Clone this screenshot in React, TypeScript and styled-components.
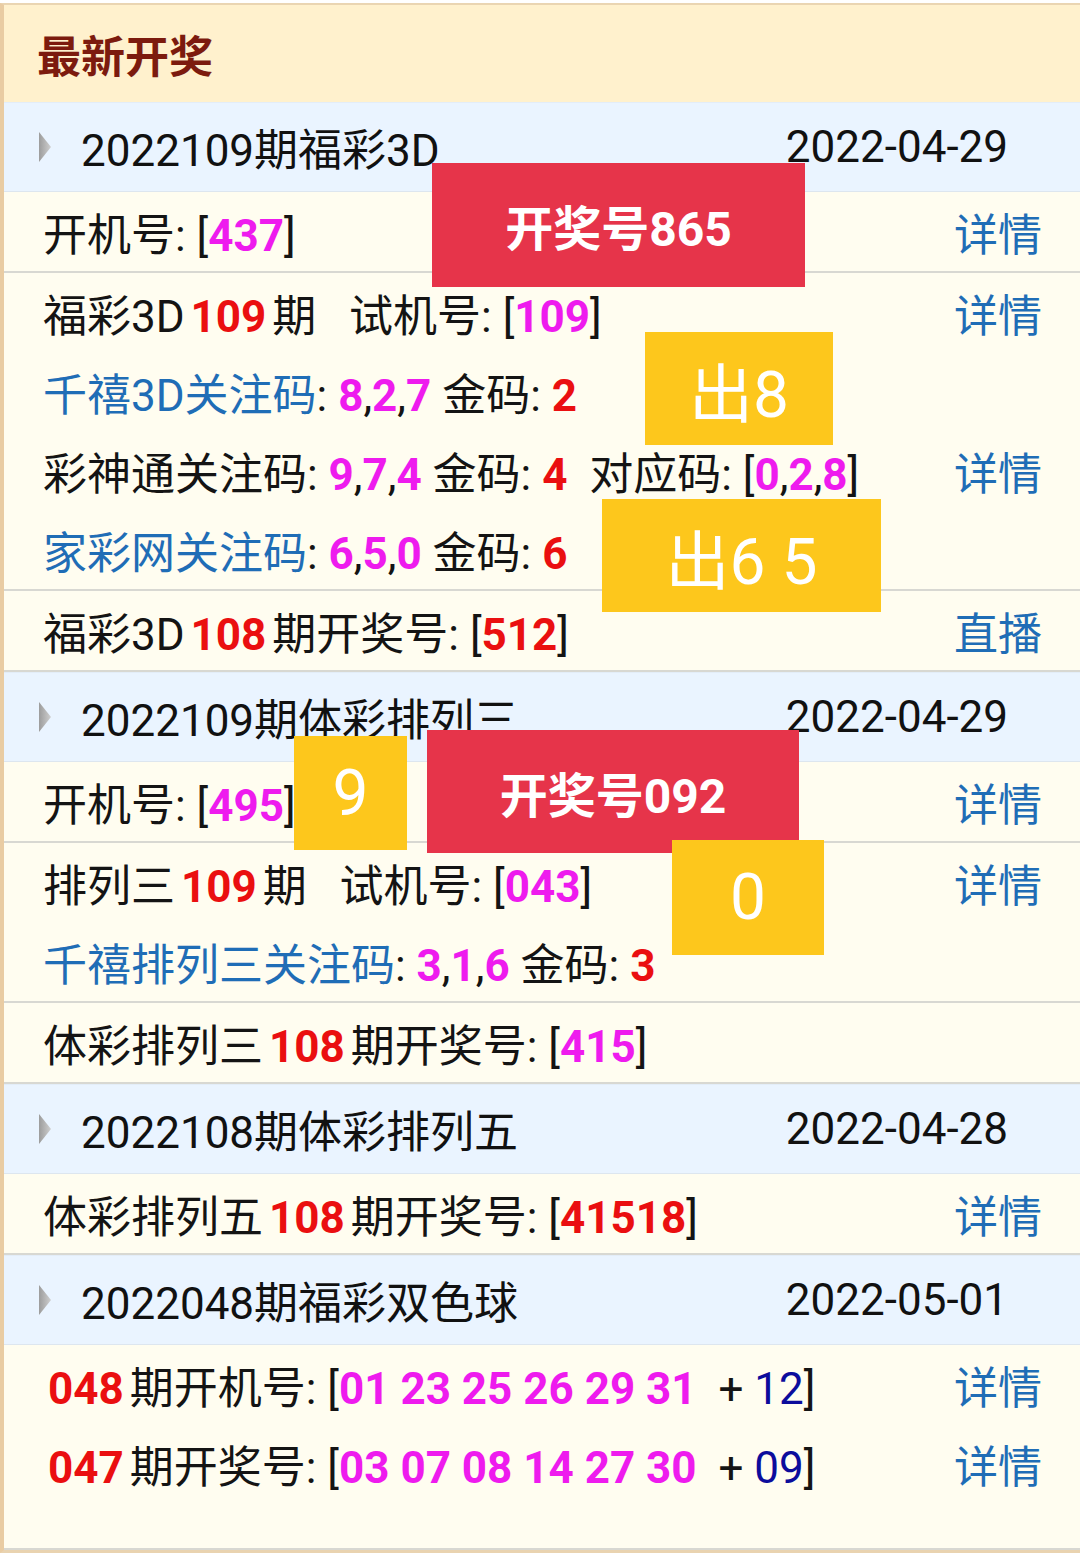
import React from 'react';
import styled, { createGlobalStyle } from 'styled-components';

const GlobalStyle = createGlobalStyle`
  html, body {
    margin: 0;
    padding: 0;
    background: #ffffff;
  }
  body {
    font-family: Roboto, "Noto Sans CJK SC", sans-serif;
    color: #141414;
  }
`;

const Page = styled.div`
  position: relative;
  width: 1080px;
  height: 1558px;
  padding-top: 3px;
  box-sizing: border-box;
  overflow: hidden;
  background: #ffffff;
`;

const Board = styled.div`
  border-top: 2px solid #ead5b2;
  border-left: 4px solid #e9cca3;
  border-bottom: 3px solid #e9d3b0;
  background: #fffdf0;
`;

const Title = styled.div`
  display: flex;
  align-items: center;
  height: 97px;
  padding-left: 33px;
  background: #fff1cd;
  color: #7c1b0e;
  font-size: 44px;
  font-weight: 700;
`;

const Head = styled.div`
  display: flex;
  align-items: center;
  height: 88px;
  padding: 0 72px 0 35px;
  background: #eaf4ff;
  border-top: 1px solid #e3edf8;
  border-bottom: 1px solid #dde6ef;
  font-size: 44px;
`;

const HeadTitle = styled.span`
  flex: 1;
  margin-left: 29px;
  color: #111;
`;

const HeadDate = styled.span`
  color: #111;
`;

const Group = styled.div<{ $tail?: number }>`
  background: #fffdf0;
  border-bottom: 2px solid #d8d8d2;
  padding-bottom: ${({ $tail }) => $tail ?? 0}px;
`;

const Line = styled.div<{ $indent?: number }>`
  display: flex;
  align-items: center;
  justify-content: space-between;
  height: 79px;
  padding: 0 38px 0 ${({ $indent }) => $indent ?? 39}px;
  font-size: 44px;
  white-space: pre;
`;

// $gap: 'both' for an issue number set between words, 'after' at line start, none inside brackets
const Issue = styled.b<{ $gap?: 'both' | 'after' }>`
  color: #ea0f10;
  font-weight: 700;
  margin: 0 ${({ $gap }) => ($gap ? 6 : 0)}px 0 ${({ $gap }) => ($gap === 'both' ? 6 : 0)}px;
`;

const Pick = styled.b`
  color: #ee1bee;
  font-weight: 700;
`;

const Special = styled.span`
  color: #0c0c9c;
`;

const Source = styled.span`
  color: #1f6db6;
`;

const More = styled.span`
  color: #1f6db6;
`;

const Stamp = styled.div<{ $tone: 'red' | 'gold'; $bold?: boolean }>`
  position: absolute;
  display: flex;
  align-items: center;
  justify-content: center;
  background: ${({ $tone }) => ($tone === 'red' ? '#e6344a' : '#fdc71c')};
  color: #ffffff;
  font-size: ${({ $bold }) => ($bold ? 48 : 64)}px;
  font-weight: ${({ $bold }) => ($bold ? 700 : 400)};
  white-space: pre;
`;

const Arrow = () => (
  <svg width="13" height="32" viewBox="0 0 13 32">
    <defs>
      <linearGradient id="arrowFill" x1="0" y1="0" x2="1" y2="0">
        <stop offset="0" stopColor="#9c9c9c" />
        <stop offset="1" stopColor="#cfcfcf" />
      </linearGradient>
    </defs>
    <polygon points="0,1 12,16 0,31" fill="url(#arrowFill)" />
  </svg>
);

const Section = ({ title, date }: { title: string; date: string }) => (
  <Head>
    <Arrow />
    <HeadTitle>{title}</HeadTitle>
    <HeadDate>{date}</HeadDate>
  </Head>
);

const Triple = ({ nums }: { nums: string[] }) => (
  <>
    {nums.map((n, i) => (
      <React.Fragment key={i}>
        {i > 0 && ','}
        <Pick>{n}</Pick>
      </React.Fragment>
    ))}
  </>
);

const stamps = [
  { tone: 'red' as const, bold: true, text: '开奖号865', left: 432, top: 163, w: 373, h: 124 },
  { tone: 'gold' as const, text: '出8', left: 645, top: 332, w: 188, h: 113 },
  { tone: 'gold' as const, text: '出6 5', left: 602, top: 499, w: 279, h: 113 },
  { tone: 'gold' as const, text: '9', left: 294, top: 736, w: 113, h: 114 },
  { tone: 'red' as const, bold: true, text: '开奖号092', left: 427, top: 730, w: 372, h: 123 },
  { tone: 'gold' as const, text: '0', left: 672, top: 840, w: 152, h: 115 },
];

export default function App() {
  return (
    <Page>
      <GlobalStyle />
      <Board>
        <Title>最新开奖</Title>

        <Section title="2022109期福彩3D" date="2022-04-29" />
        <Group>
          <Line>
            <span>
              开机号: [<Pick>437</Pick>]
            </span>
            <More>详情</More>
          </Line>
        </Group>
        <Group>
          <Line>
            <span>
              福彩3D<Issue $gap="both">109</Issue>期   试机号: [<Pick>109</Pick>]
            </span>
            <More>详情</More>
          </Line>
          <Line>
            <span>
              <Source>千禧3D关注码</Source>: <Triple nums={['8', '2', '7']} /> 金码: <Issue>2</Issue>
            </span>
          </Line>
          <Line>
            <span>
              彩神通关注码: <Triple nums={['9', '7', '4']} /> 金码: <Issue>4</Issue>  对应码: [
              <Triple nums={['0', '2', '8']} />]
            </span>
            <More>详情</More>
          </Line>
          <Line>
            <span>
              <Source>家彩网关注码</Source>: <Triple nums={['6', '5', '0']} /> 金码: <Issue>6</Issue>
            </span>
          </Line>
        </Group>
        <Group>
          <Line>
            <span>
              福彩3D<Issue $gap="both">108</Issue>期开奖号: [<Issue>512</Issue>]
            </span>
            <More>直播</More>
          </Line>
        </Group>

        <Section title="2022109期体彩排列三" date="2022-04-29" />
        <Group>
          <Line>
            <span>
              开机号: [<Pick>495</Pick>]
            </span>
            <More>详情</More>
          </Line>
        </Group>
        <Group>
          <Line>
            <span>
              排列三<Issue $gap="both">109</Issue>期   试机号: [<Pick>043</Pick>]
            </span>
            <More>详情</More>
          </Line>
          <Line>
            <span>
              <Source>千禧排列三关注码</Source>: <Triple nums={['3', '1', '6']} /> 金码: <Issue>3</Issue>
            </span>
          </Line>
        </Group>
        <Group>
          <Line>
            <span>
              体彩排列三<Issue $gap="both">108</Issue>期开奖号: [<Pick>415</Pick>]
            </span>
          </Line>
        </Group>

        <Section title="2022108期体彩排列五" date="2022-04-28" />
        <Group>
          <Line>
            <span>
              体彩排列五<Issue $gap="both">108</Issue>期开奖号: [<Issue>41518</Issue>]
            </span>
            <More>详情</More>
          </Line>
        </Group>

        <Section title="2022048期福彩双色球" date="2022-05-01" />
        <Group $tail={45}>
          <Line $indent={44}>
            <span>
              <Issue $gap="after">048</Issue>期开机号: [<Pick>01 23 25 26 29 31</Pick>  + <Special>12</Special>]
            </span>
            <More>详情</More>
          </Line>
          <Line $indent={44}>
            <span>
              <Issue $gap="after">047</Issue>期开奖号: [<Pick>03 07 08 14 27 30</Pick>  + <Special>09</Special>]
            </span>
            <More>详情</More>
          </Line>
        </Group>
      </Board>

      {stamps.map(s => (
        <Stamp
          key={s.text + s.left}
          $tone={s.tone}
          $bold={s.bold}
          style={{ left: s.left, top: s.top, width: s.w, height: s.h }}
        >
          {s.text}
        </Stamp>
      ))}
    </Page>
  );
}
